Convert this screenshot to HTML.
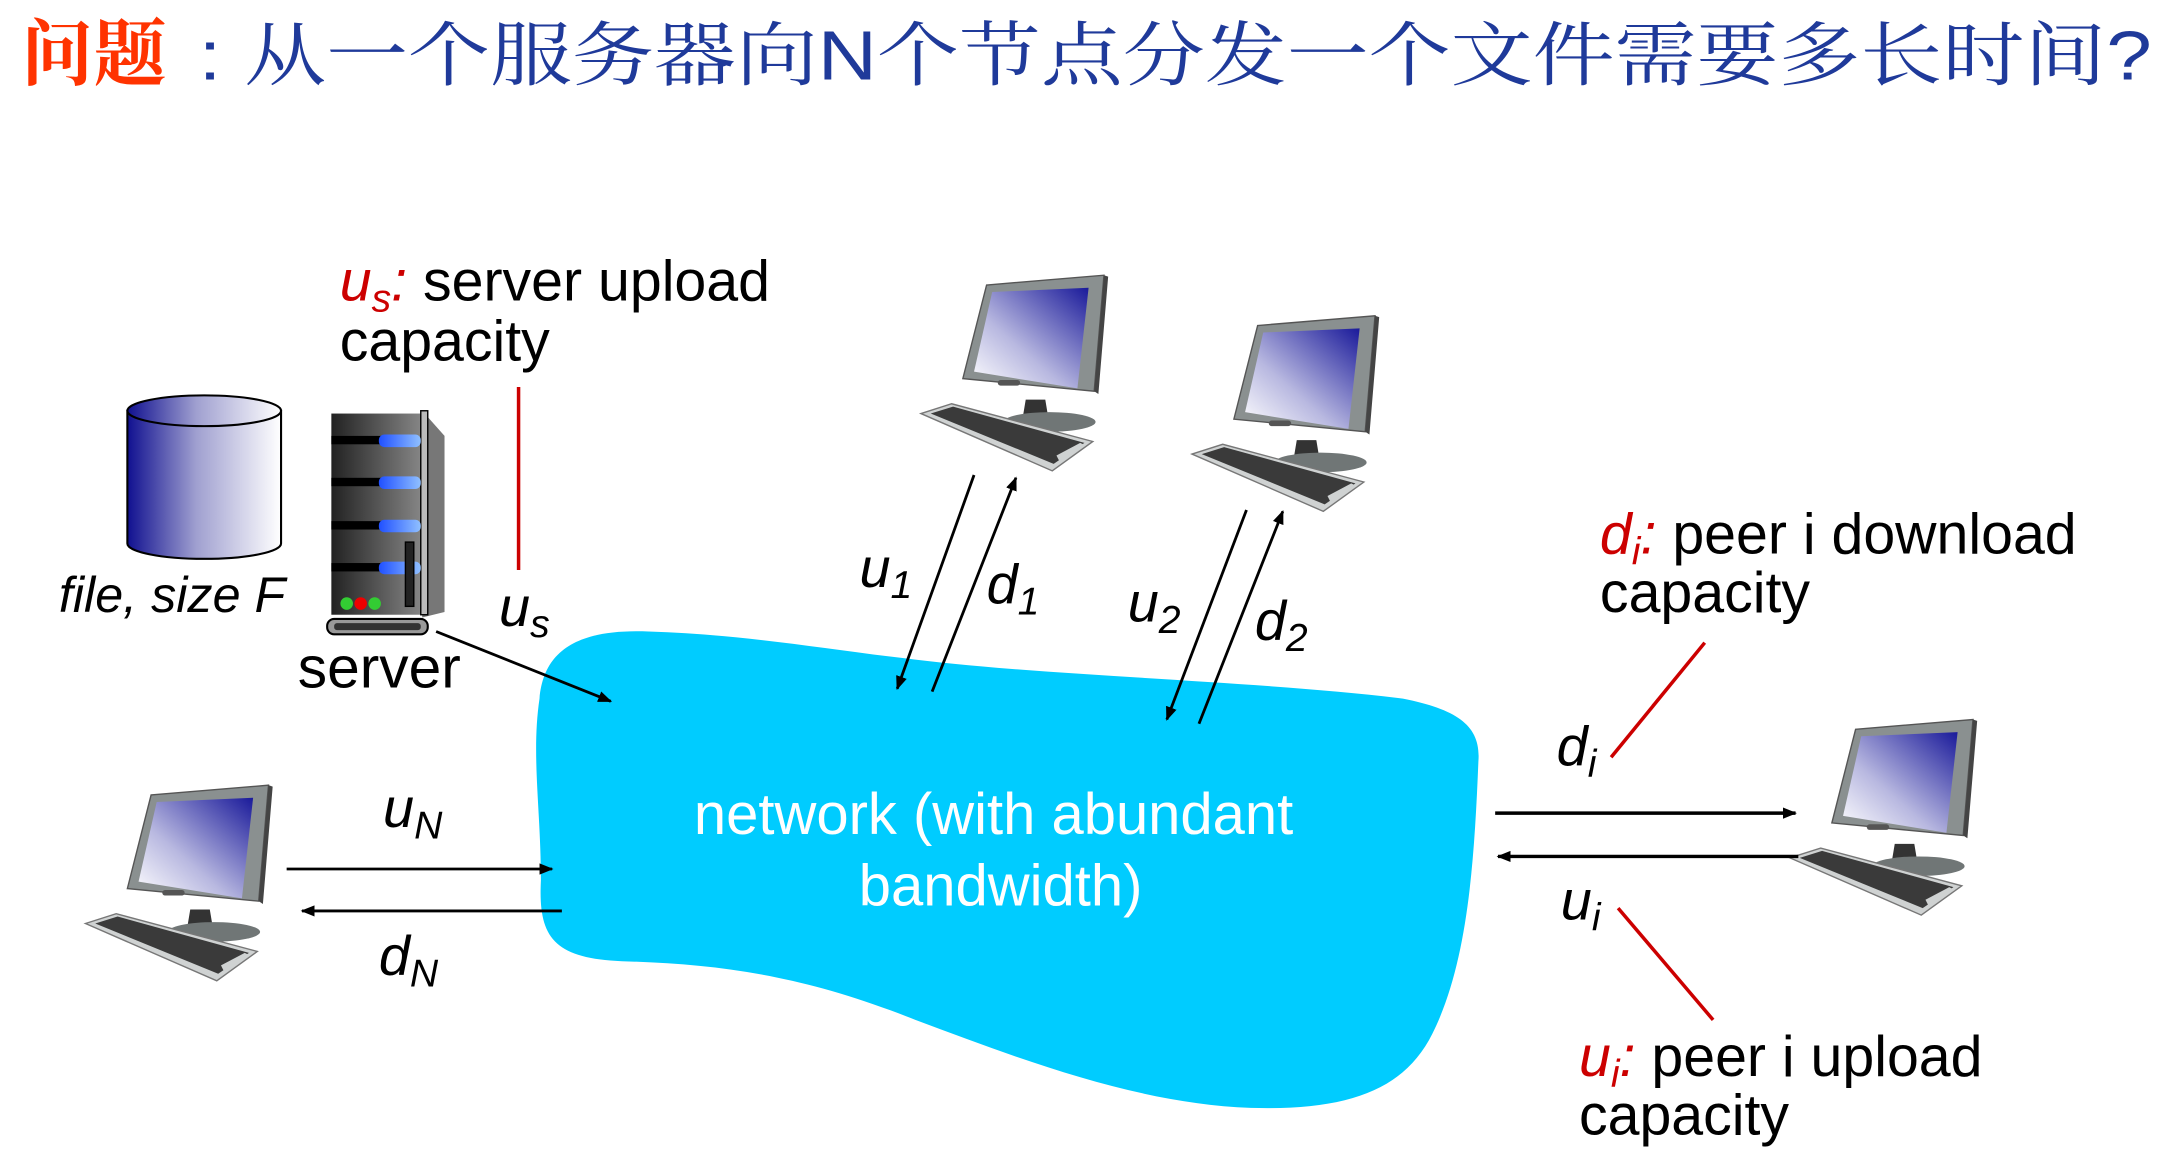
<!DOCTYPE html>
<html><head><meta charset="utf-8"><style>
html,body{margin:0;padding:0;background:#fff;width:2173px;height:1168px;overflow:hidden}
svg{display:block}
text{font-family:"Liberation Sans","Noto Sans CJK SC",sans-serif}
</style></head><body>
<svg width="2173" height="1168" viewBox="0 0 1555 836" xmlns="http://www.w3.org/2000/svg">
<defs>
<linearGradient id="scr" x1="1" y1="0" x2="0" y2="1"><stop offset="0" stop-color="#1a1a9a"/><stop offset="0.6" stop-color="#b8b8e0"/><stop offset="1" stop-color="#ffffff"/></linearGradient>
<linearGradient id="cyl" x1="0" y1="0" x2="1" y2="0"><stop offset="0" stop-color="#101090"/><stop offset="0.45" stop-color="#a0a0d0"/><stop offset="1" stop-color="#ffffff"/></linearGradient>
<linearGradient id="srv" x1="0" y1="0" x2="1" y2="0"><stop offset="0" stop-color="#222"/><stop offset="1" stop-color="#888"/></linearGradient>
<linearGradient id="led" x1="0" y1="0" x2="1" y2="0"><stop offset="0" stop-color="#2050ff"/><stop offset="1" stop-color="#90c0ff"/></linearGradient>
<marker id="ah" viewBox="0 0 10 10" refX="9" refY="5" markerWidth="10" markerHeight="10" markerUnits="userSpaceOnUse" orient="auto"><path d="M0,1 L10,5 L0,9 Z" fill="#000"/></marker>
<g id="pc">
 <polygon points="48,18 132,11 125,94 31,85" fill="#8a9090" stroke="#555" stroke-width="1"/>
 <polygon points="132,11 135,12 128,96 125,94" fill="#444"/>
 <polygon points="52,23 121,20 113,92 39,80" fill="url(#scr)"/>
 <rect x="56" y="86" width="16" height="4" rx="2" fill="#555"/>
 <polygon points="76,100 90,100 92,112 74,112" fill="#333"/>
 <ellipse cx="93" cy="116" rx="33" ry="7" fill="#707676"/>
 <polygon points="1,110 23,103 124,130 95,151" fill="#cfd2d2" stroke="#777" stroke-width="1"/>
 <polygon points="8,110 24,105 118,131 96,146" fill="#3a3a3a"/>
 <polygon points="98,140 115,131 119,133 100,144" fill="#cfd2d2"/>
</g>
</defs>

<text x="15" y="57" font-size="52" fill="#FF3300" font-weight="bold" style="font-family:'Noto Serif CJK SC',serif">问题</text>
<text x="142" y="57" font-size="50" fill="#1F3A9A" textLength="1398" lengthAdjust="spacingAndGlyphs" style="font-family:'Liberation Sans','Noto Serif CJK SC',serif">: 从一个服务器向N个节点分发一个文件需要多长时间?</text>

<path d="M386,500 C389,465 414,450 464,452 C554,455 614,470 714,478 C814,486 924,490 1004,500 C1044,508 1060,520 1058,545 C1055,620 1050,690 1025,740 C1005,780 965,795 895,793 C815,790 735,760 655,730 C575,698 515,690 445,688 C395,686 385,670 387,630 C387,580 380,540 386,500 Z" fill="#00CCFF"/>
<text x="711" y="597" font-size="41.5" fill="#fff" text-anchor="middle">network (with abundant</text>
<text x="716" y="648" font-size="41.5" fill="#fff" text-anchor="middle">bandwidth)</text>

<path d="M91,294 L91,389 A55,11 0 0 0 201,389 L201,294 Z" fill="url(#cyl)" stroke="#000" stroke-width="1.5"/>
<ellipse cx="146" cy="294" rx="55" ry="11" fill="url(#cyl)" stroke="#000" stroke-width="1.5"/>
<text x="42" y="438" font-size="36" font-style="italic">file, size F</text>

<polygon points="302,294 318,312 318,438 302,442" fill="#777"/>
<rect x="237" y="296" width="66" height="144" fill="url(#srv)"/>
<rect x="301" y="294" width="5" height="146" fill="#bbb" stroke="#000" stroke-width="1"/>
<g fill="#000"><rect x="237" y="312" width="40" height="6"/><rect x="237" y="342" width="40" height="6"/><rect x="237" y="373" width="40" height="6"/><rect x="237" y="403" width="40" height="6"/></g>
<g fill="url(#led)"><rect x="271" y="311" width="30" height="9" rx="4"/><rect x="271" y="341" width="30" height="9" rx="4"/><rect x="271" y="372" width="30" height="9" rx="4"/><rect x="271" y="402" width="30" height="9" rx="4"/></g>
<rect x="290" y="388" width="6" height="46" fill="#222" stroke="#000"/>
<circle cx="248" cy="432" r="4.5" fill="#33cc33"/><circle cx="258" cy="432" r="4.5" fill="#ee0000"/><circle cx="268" cy="432" r="4.5" fill="#33cc33"/>
<rect x="234" y="443" width="72" height="11" rx="5" fill="#999" stroke="#000" stroke-width="1.5"/>
<rect x="239" y="446" width="62" height="5" rx="2" fill="#333"/>
<text x="213" y="492" font-size="42">server</text>

<text x="243" y="215" font-size="41"><tspan fill="#CC0000" font-style="italic">u</tspan><tspan fill="#CC0000" font-style="italic" font-size="28" dy="8">s</tspan><tspan fill="#CC0000" font-style="italic" dy="-8">:</tspan> server upload</text>
<text x="243" y="258" font-size="41">capacity</text>
<line x1="371" y1="277" x2="371" y2="408" stroke="#CC0000" stroke-width="2.5"/>
<text x="357" y="448" font-size="40" font-style="italic">u<tspan font-size="28" dy="8">s</tspan></text>
<line x1="312" y1="452" x2="437" y2="502" stroke="#000" stroke-width="2" marker-end="url(#ah)"/>

<use href="#pc" transform="translate(658,186)"/>
<use href="#pc" transform="translate(852,215)"/>
<use href="#pc" transform="translate(60,551)"/>
<use href="#pc" transform="translate(1280,504)"/>

<g stroke="#000" stroke-width="2" fill="none">
<line x1="697" y1="340" x2="642" y2="493" marker-end="url(#ah)"/>
<line x1="667" y1="495" x2="727" y2="342" marker-end="url(#ah)"/>
<line x1="892" y1="365" x2="835" y2="515" marker-end="url(#ah)"/>
<line x1="858" y1="518" x2="918" y2="366" marker-end="url(#ah)"/>
<line x1="205" y1="622" x2="395" y2="622" marker-end="url(#ah)"/>
<line x1="402" y1="652" x2="216" y2="652" marker-end="url(#ah)"/>
<line x1="1070" y1="582" x2="1285" y2="582" stroke-width="2.5" marker-end="url(#ah)"/>
<line x1="1287" y1="613" x2="1072" y2="613" stroke-width="2.5" marker-end="url(#ah)"/>
</g>
<g font-size="40" font-style="italic">
<text x="615" y="420">u<tspan font-size="28" dy="8">1</tspan></text>
<text x="706" y="432">d<tspan font-size="28" dy="8">1</tspan></text>
<text x="807" y="445">u<tspan font-size="28" dy="8">2</tspan></text>
<text x="898" y="458">d<tspan font-size="28" dy="8">2</tspan></text>
<text x="274" y="592">u<tspan font-size="28" dy="8">N</tspan></text>
<text x="271" y="698">d<tspan font-size="28" dy="8">N</tspan></text>
<text x="1114" y="548">d<tspan font-size="28" dy="8">i</tspan></text>
<text x="1117" y="658">u<tspan font-size="28" dy="8">i</tspan></text>
</g>
<line x1="1220" y1="460" x2="1153" y2="542" stroke="#CC0000" stroke-width="2.5"/>
<line x1="1158" y1="650" x2="1226" y2="730" stroke="#CC0000" stroke-width="2.5"/>

<text x="1145" y="396" font-size="41"><tspan fill="#CC0000" font-style="italic">d</tspan><tspan fill="#CC0000" font-style="italic" font-size="28" dy="8">i</tspan><tspan fill="#CC0000" font-style="italic" dy="-8">:</tspan> peer i download</text>
<text x="1145" y="438" font-size="41">capacity</text>
<text x="1130" y="770" font-size="41"><tspan fill="#CC0000" font-style="italic">u</tspan><tspan fill="#CC0000" font-style="italic" font-size="28" dy="8">i</tspan><tspan fill="#CC0000" font-style="italic" dy="-8">:</tspan> peer i upload</text>
<text x="1130" y="812" font-size="41">capacity</text>
</svg>
</body></html>
